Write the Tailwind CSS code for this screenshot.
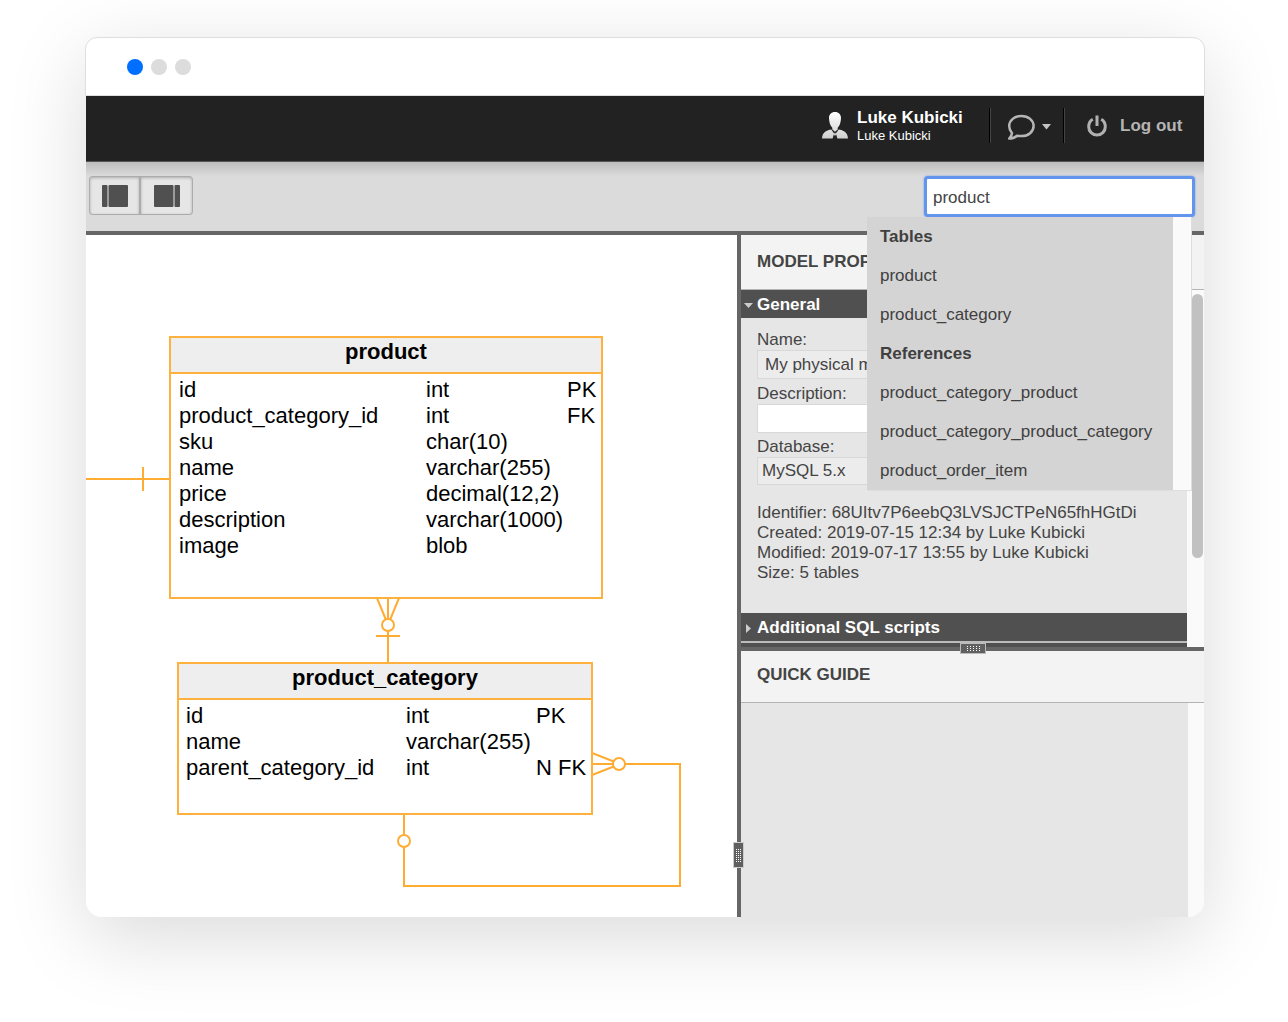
<!DOCTYPE html>
<html lang="en">
<head>
<meta charset="utf-8">
<meta name="viewport" content="width=device-width, initial-scale=1">
<title>Data modeler</title>
<script src="https://cdn.jsdelivr.net/npm/@tailwindcss/browser@4"></script>
</head>
<body class="bg-white font-['Liberation_Sans',Arial,sans-serif] text-[17px] leading-5 text-[#444]">
<div class="flex min-h-screen pt-[37px] pr-[84px] pb-[105px] pl-[86px]">
  <div class="flex min-w-0 flex-1 flex-col rounded-2xl shadow-[0_20px_80px_rgba(0,0,0,0.15)]">

    <!-- Window title bar -->
    <div class="-mx-px flex h-[59px] shrink-0 items-center gap-2 rounded-t-xl border border-[#dcdfdd] bg-white pl-[41px]">
      <span class="size-4 rounded-full bg-[#006eff]"></span>
      <span class="size-4 rounded-full bg-[#dcdcdc]"></span>
      <span class="size-4 rounded-full bg-[#dcdcdc]"></span>
    </div>

    <div class="flex flex-1 flex-col overflow-hidden rounded-b-2xl bg-white">
      <!-- Account bar -->
      <header class="flex h-[66px] shrink-0 items-center justify-end border-b border-[#555] bg-[#222] pr-5 pb-[6px]">
        <svg class="mr-[9px] h-[27px] w-[26px]" viewBox="0 0 26 27" aria-hidden="true">
          <defs><linearGradient id="person" x1="0" y1="0" x2="0" y2="1"><stop offset="0" stop-color="#fff"/><stop offset="1" stop-color="#d0d0d0"/></linearGradient></defs>
          <path fill="url(#person)" d="M13 0C9.300 0 6.800 2.400 7 6.500C7.200 10.500 8.300 13.800 10.300 15.800V17.600L13 19.700L15.700 17.600V15.800C17.700 13.800 18.800 10.500 19 6.500C19.200 2.400 16.700 0 13 0ZM9.300 17.400C5 18.300 0.300 19.500 0 26.500H10.600L12.100 21.600ZM16.700 17.400L13.900 21.600L15.400 26.500H26C25.700 19.500 21 18.300 16.700 17.400ZM13 20.600L11.800 22.200L13 24L14.200 22.200Z"/>
        </svg>
        <div class="w-[132px] text-white">
          <div class="leading-5 font-bold">Luke Kubicki</div>
          <div class="text-[13px] leading-4">Luke Kubicki</div>
        </div>
        <span class="h-[35px] w-[2px] border-r border-l border-r-[#444] border-l-black"></span>
        <button type="button" aria-label="Feedback" class="flex items-center gap-[7px] pt-[2px] pr-3 pl-4">
          <svg class="h-[26px] w-7" viewBox="0 0 28 26" fill="none" stroke="#b5b5b5" stroke-width="2.500" stroke-linejoin="round" aria-hidden="true">
            <path d="M14.500 2C7.500 2 2.200 6.300 2.200 12C2.200 15 3.400 17.300 5 19.100C4.800 21.200 3.600 23.200 2.200 24.600C5.800 24.500 8.400 23.400 10.200 21.700C11.500 22 13.200 22.100 14.500 22.100C21.300 22.100 26.600 17.700 26.600 12C26.600 6.300 21.300 2 14.500 2Z"/>
          </svg>
          <svg class="h-[6px] w-[9px]" viewBox="0 0 9 6" aria-hidden="true"><path fill="#c4c4c4" d="M0 0H9L4.500 5.500Z"/></svg>
        </button>
        <span class="h-[35px] w-[2px] border-r border-l border-r-[#444] border-l-black"></span>
        <a href="#" class="ml-[22px] flex items-center gap-[13px] font-bold text-[#b5b5b5]">
          <svg class="h-[22px] w-5" viewBox="0 0 20 22" fill="none" stroke="#b0b0b0" stroke-width="3" aria-hidden="true">
            <path d="M5.800 4.300C3.300 5.700 1.700 8.200 1.700 11.700C1.700 16.400 5.400 20 10 20S18.300 16.400 18.300 11.700C18.300 8.200 16.700 5.700 14.200 4.300M10 0.500V11"/>
          </svg>
          <span class="w-16">Log out</span>
        </a>
      </header>

      <!-- Toolbar -->
      <div class="flex h-[73px] shrink-0 items-start justify-between border-b-4 border-[#666] bg-[#dbdbdb] bg-[linear-gradient(#bcbcbc,#dbdbdb_14px)] pt-[14px] pr-[9px] pl-[3px]">
        <div class="flex">
          <button type="button" aria-label="Toggle left panel" class="flex h-[39px] w-[52px] items-center justify-center rounded-l border border-r-2 border-[#acacac] bg-[#e6e6e6] shadow-[inset_0_1px_3px_rgba(0,0,0,0.25)]">
            <svg class="h-[22px] w-[26px]" viewBox="0 0 26 22" fill="#505050" aria-hidden="true"><rect width="5.500" height="22" rx="1"/><rect x="6.500" width="19.500" height="22" rx="1"/></svg>
          </button>
          <button type="button" aria-label="Toggle right panel" class="flex h-[39px] w-[52px] items-center justify-center rounded-r border border-l-0 border-[#acacac] bg-[#e6e6e6] shadow-[inset_0_1px_3px_rgba(0,0,0,0.25)]">
            <svg class="h-[22px] w-[26px]" viewBox="0 0 26 22" fill="#505050" aria-hidden="true"><rect width="19.500" height="22" rx="1"/><rect x="20.500" width="5.500" height="22" rx="1"/></svg>
          </button>
        </div>
        <div class="relative z-10">
          <input type="text" aria-label="Search the model" value="product" class="block h-[41px] w-[271px] rounded-sm border-[3px] border-[#6495ed] bg-white px-[6px] pt-[2px] text-[#444] shadow-[0_0_2px_#6495ed] outline-none">
          <div class="absolute top-[41px] right-[3px] flex w-[325px] border-r border-b border-[#dedede] bg-[#fafafa]">
            <ul role="listbox" aria-label="Search results" class="flex-1 bg-[#d4d4d4] pl-[13px] leading-[39px] text-[#404040]">
              <li class="font-bold">Tables</li>
              <li role="option">product</li>
              <li role="option">product_category</li>
              <li class="font-bold">References</li>
              <li role="option">product_category_product</li>
              <li role="option">product_category_product_category</li>
              <li role="option">product_order_item</li>
            </ul>
            <div class="w-[18px]"></div>
          </div>
        </div>
      </div>

      <div class="flex flex-1">
        <!-- Diagram -->
        <main class="relative min-w-0 flex-1 overflow-hidden bg-white text-[22px] leading-[26px] text-black">
          <svg class="absolute top-0 left-0 h-[682px] w-[651px]" viewBox="0 0 651 682" fill="none" stroke="#ffac33" stroke-width="2" aria-hidden="true">
            <path d="M0 244H84M57 232V256"/>
            <path d="M302 363V427M291 363L300 385M313 363L304 385M290 401H314"/>
            <path d="M506 518L529 527M506 540L529 531M506 529H594V651H318V579"/>
            <circle cx="302" cy="390" r="6" fill="#fff"/>
            <circle cx="533" cy="529" r="6" fill="#fff"/>
            <circle cx="318" cy="606" r="6" fill="#fff"/>
          </svg>

          <section class="absolute top-[101px] left-[83px] h-[263px] w-[434px] border-2 border-[#ffb13d] bg-white">
            <h2 class="h-9 border-b-2 border-[#ffb13d] bg-[#eee] text-center leading-7 font-bold">product</h2>
            <table class="mt-[3px] ml-2 text-left">
              <colgroup><col class="w-[247px]"><col class="w-[141px]"><col></colgroup>
              <tbody>
                <tr><td>id</td><td>int</td><td>PK</td></tr>
                <tr><td>product_category_id</td><td>int</td><td>FK</td></tr>
                <tr><td>sku</td><td>char(10)</td><td></td></tr>
                <tr><td>name</td><td>varchar(255)</td><td></td></tr>
                <tr><td>price</td><td>decimal(12,2)</td><td></td></tr>
                <tr><td>description</td><td>varchar(1000)</td><td></td></tr>
                <tr><td>image</td><td>blob</td><td></td></tr>
              </tbody>
            </table>
          </section>

          <section class="absolute top-[427px] left-[91px] h-[153px] w-[416px] border-2 border-[#ffb13d] bg-white">
            <h2 class="h-9 border-b-2 border-[#ffb13d] bg-[#eee] text-center leading-7 font-bold">product_category</h2>
            <table class="mt-[3px] ml-[7px] text-left whitespace-nowrap">
              <colgroup><col class="w-[220px]"><col class="w-[130px]"><col></colgroup>
              <tbody>
                <tr><td>id</td><td>int</td><td>PK</td></tr>
                <tr><td>name</td><td>varchar(255)</td><td></td></tr>
                <tr><td>parent_category_id</td><td>int</td><td>N FK</td></tr>
              </tbody>
            </table>
          </section>
        </main>

        <!-- Vertical splitter -->
        <div class="relative w-1 shrink-0 bg-[#666]">
          <div class="absolute bottom-[50px] -left-[3px] z-10 flex h-6 w-[9px] items-center justify-center bg-[#606060] outline outline-[#ccc]">
            <svg class="h-[13px] w-[5px]" viewBox="0 0 5 13" stroke="#fff" stroke-dasharray="1 1" aria-hidden="true"><path d="M0.500 0V13M2.500 0V13M4.500 0V13"/></svg>
          </div>
        </div>

        <!-- Side panels -->
        <aside class="flex w-[463px] shrink-0 flex-col bg-[#fafafa]">
          <h2 class="h-[55px] shrink-0 border-b border-[#b4b4b4] bg-[#f3f3f3] pl-4 leading-[53px] font-bold">MODEL PROPERTIES</h2>
          <div class="relative pr-[17px]">
            <button type="button" class="flex h-7 w-full items-center gap-1 bg-[#505050] pt-[2px] pl-[3px] font-bold text-white">
              <svg class="h-[5px] w-[9px]" viewBox="0 0 9 5" aria-hidden="true"><path fill="#ccc" d="M0 0H9L4.500 5Z"/></svg>General
            </button>
            <div class="flex flex-col bg-[#e6e6e6] px-4 pt-[10px] pb-[30px]">
              <label for="model-name" class="pt-[2px]">Name:</label>
              <input id="model-name" type="text" value="My physical model" class="mb-[3px] h-[29px] border border-[#d8d8d8] bg-[#ececec] px-[7px]">
              <label for="model-description" class="pt-[2px]">Description:</label>
              <textarea id="model-description" rows="1" class="mb-[2px] h-[29px] resize-none border border-[#d8d8d8] bg-white px-[7px]"></textarea>
              <label for="model-database" class="pt-[2px]">Database:</label>
              <select id="model-database" class="h-7 appearance-none border border-[#d8d8d8] bg-[#ececec] px-1"><option>MySQL 5.x</option></select>
              <p class="mt-[18px]">Identifier: 68UItv7P6eebQ3LVSJCTPeN65fhHGtDi</p>
              <p>Created: 2019-07-15 12:34 by Luke Kubicki</p>
              <p>Modified: 2019-07-17 13:55 by Luke Kubicki</p>
              <p>Size: 5 tables</p>
            </div>
            <button type="button" class="flex h-7 w-full items-center gap-[6px] bg-[#505050] pt-[2px] pl-[5px] font-bold text-white">
              <svg class="h-[9px] w-[5px]" viewBox="0 0 5 9" aria-hidden="true"><path fill="#ccc" d="M0 0L5 4.500L0 9Z"/></svg>Additional SQL scripts
            </button>
            <div class="h-[6px] border-t-2 border-[#bcbcbc] bg-[#505050]"></div>
            <div class="absolute top-1 right-px h-[264px] w-[11px] rounded-full bg-[#c1c1c1]"></div>
          </div>

          <!-- Horizontal splitter -->
          <div class="relative h-1 shrink-0 bg-[#666]">
            <div class="absolute -top-[3px] left-[220px] flex h-[9px] w-6 items-center justify-center bg-[#606060] outline outline-[#bbb]">
              <svg class="h-[5px] w-[13px]" viewBox="0 0 13 5" stroke="#fff" stroke-dasharray="1 2" aria-hidden="true"><path d="M0 0.500H13M0 2.500H13M0 4.500H13"/></svg>
            </div>
          </div>

          <h2 class="h-[52px] shrink-0 border-b border-[#b4b4b4] bg-[#f3f3f3] pl-4 leading-[47px] font-bold">QUICK GUIDE</h2>
          <div class="mr-4 flex-1 bg-[#e6e6e6]"></div>
        </aside>
      </div>
    </div>
  </div>
</div>
</body>
</html>
